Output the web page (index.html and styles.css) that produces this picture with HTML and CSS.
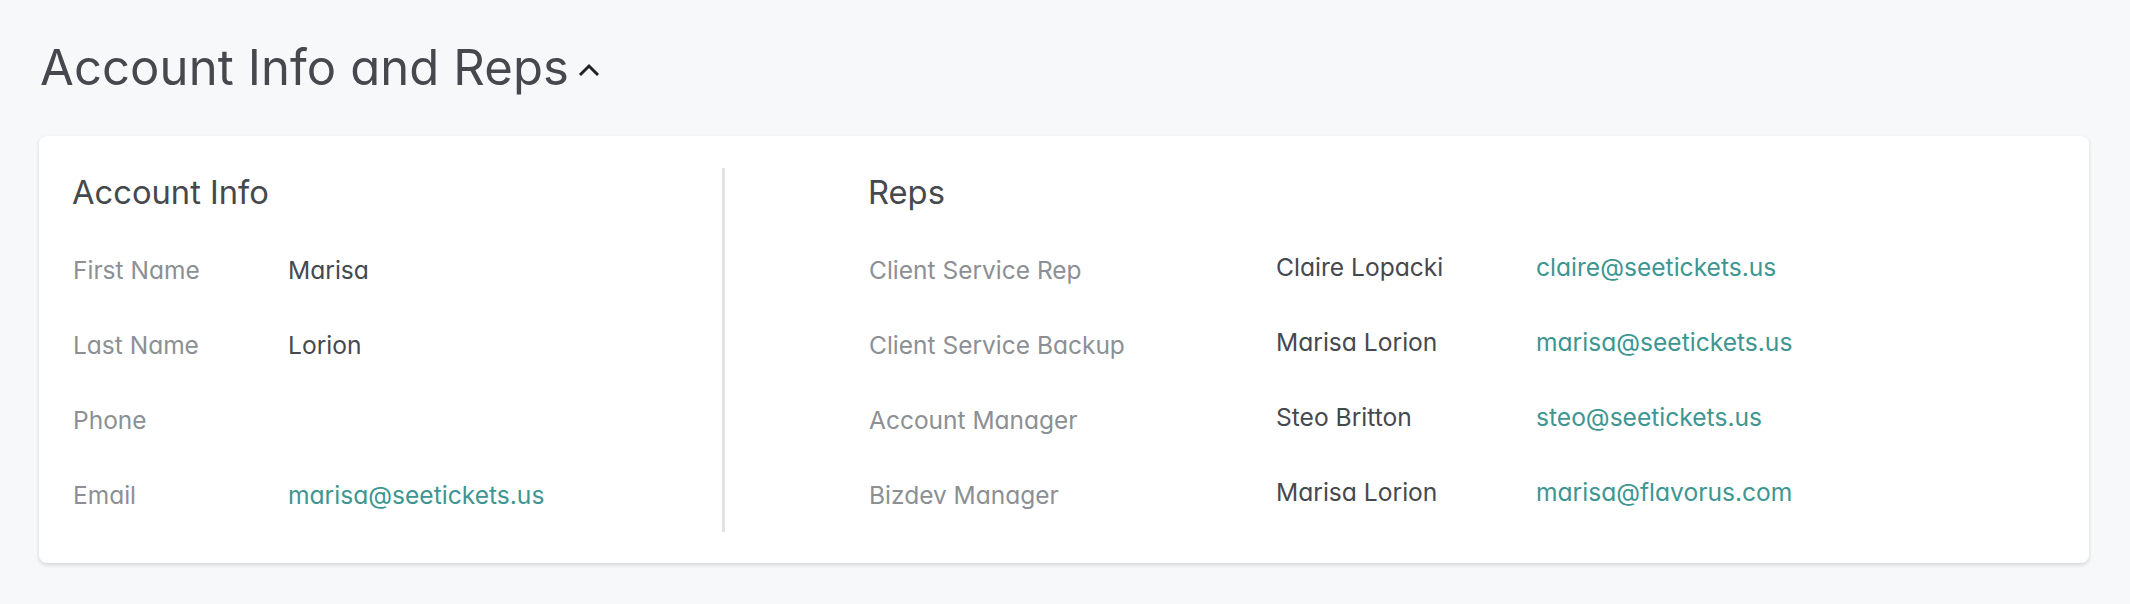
FILE: index.html
```html
<!DOCTYPE html>
<html>
    <head>
        <meta charset="utf-8">
        <title>Account Info and Reps</title>
        <link rel="stylesheet" href="styles.css">
    </head>
    <body>
      <div class="page">
        <h1 class="sectionTitle">
          Account Info and Reps
          <svg class="chevron" width="22" height="14" viewBox="0 0 22 14"><polyline points="2,12 11,3 20,12" fill="none" stroke="#222" stroke-width="3"/></svg>
        </h1>

        <div class="card">
          <div class="col accountCol">
            <h2 class="colTitle">Account Info</h2>
            <div class="infoGrid">
              <div class="label">First Name</div><div class="value">Marisa</div>
              <div class="label">Last Name</div><div class="value">Lorion</div>
              <div class="label">Phone</div><div class="value"></div>
              <div class="label">Email</div><div class="value link">marisa@seetickets.us</div>
            </div>
          </div>

          <div class="col repsCol">
            <h2 class="colTitle">Reps</h2>
            <div class="repsGrid">
              <div class="label">Client Service Rep</div><div class="rep">Claire Lopacki</div><div class="rep link">claire@seetickets.us</div>
              <div class="label">Client Service Backup</div><div class="rep">Marisa Lorion</div><div class="rep link">marisa@seetickets.us</div>
              <div class="label">Account Manager</div><div class="rep">Steo Britton</div><div class="rep link">steo@seetickets.us</div>
              <div class="label">Bizdev Manager</div><div class="rep">Marisa Lorion</div><div class="rep link">marisa@flavorus.com</div>
            </div>
          </div>
        </div>
      </div>
    </body>
</html>
```

FILE: styles.css
```css
  body {
      margin: 0;
      font-family: Inter, 'Noto Sans', sans-serif;
      font-feature-settings: 'cv11';
      background-color: #f7f8fa;
      color: #45494e;
  }

  .page {
      padding: 38px 41px 40px 39px;
  }

  .sectionTitle {
      margin: 0 0 38px 1px;
      font-size: 49px;
      line-height: 60px;
      font-weight: 400;
      color: #45494e;
      letter-spacing: 0.1px;
      display: flex;
      align-items: center;
  }

  .chevron {
      margin-left: 9px;
      margin-top: 4px;
  }

  .card {
      background-color: white;
      border-radius: 8px;
      box-shadow: 0 2px 4px rgba(0, 0, 0, 0.14);
      padding: 32px 34px 31px 34px;
      display: flex;
  }

  .col { padding-bottom: 19px; }
  .accountCol { width: 649px; }
  .repsCol {
      flex: 1;
      border-left: 3px solid #e2e2e2;
      padding-left: 144px;
  }

  .colTitle {
      margin: 0 0 37px -1px;
      font-size: 32.7px;
      line-height: 48px;
      font-weight: 400;
      color: #45494e;
  }

  .infoGrid {
      display: grid;
      grid-template-columns: 215px 1fr;
      grid-auto-rows: 35px;
      row-gap: 40px;
  }

  .repsGrid {
      display: grid;
      grid-template-columns: 407px 260px 1fr;
      grid-auto-rows: 35px;
      row-gap: 40px;
      align-items: start;
  }

  .label {
      font-size: 24.5px;
      line-height: 35px;
      color: #8c9094;
  }

  .value {
      font-size: 24.6px;
      line-height: 35px;
      color: #45494e;
  }

  .rep {
      font-size: 24.6px;
      line-height: 29px;
      color: #45494e;
  }

  .link { color: #3d9691; }
```
